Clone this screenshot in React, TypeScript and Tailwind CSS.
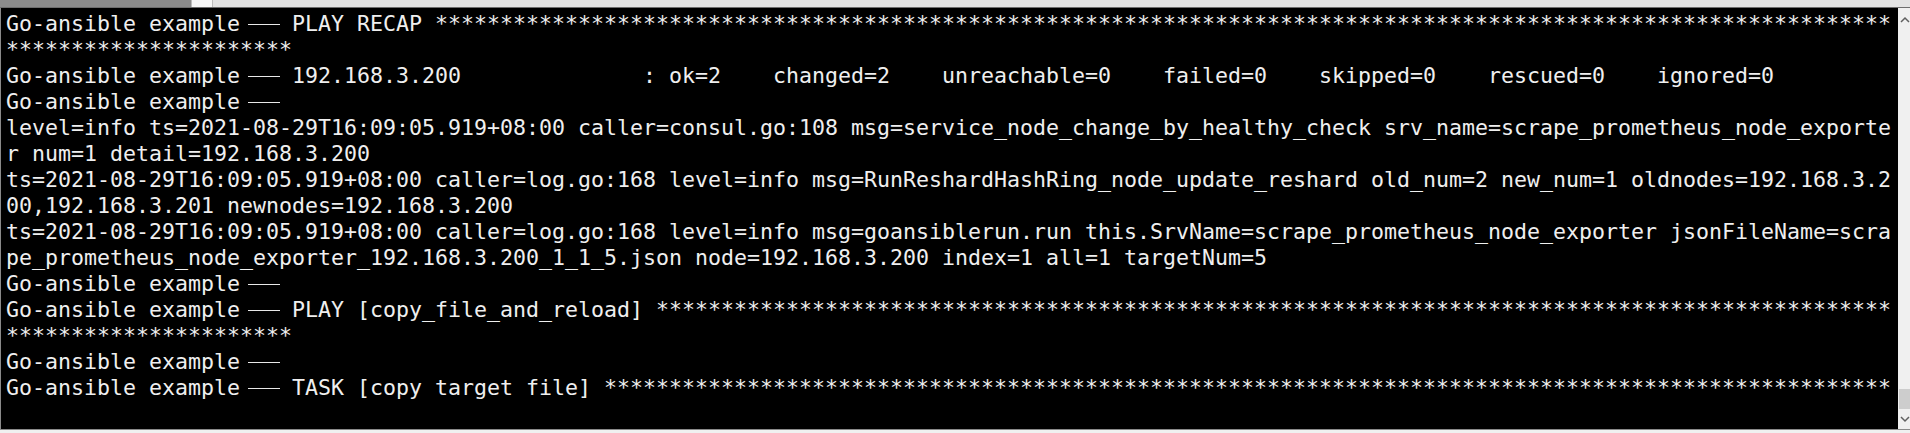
import React from "react";

const Dash = () => (
  <span className="inline-flex h-[26px] w-[52px] items-center align-top pl-[8px] pt-[1px]">
    <span className="block h-[1.5px] w-[32px] bg-[#e8e8e8]" />
  </span>
);

const Prefix = () => (
  <>
    Go-ansible example
    <Dash />
  </>
);

const stars = (n: number) => "*".repeat(n);

const Line = ({ children }: { children?: React.ReactNode }) => (
  <div className="h-[26px] leading-[26px] whitespace-pre">{children}</div>
);

export default function App() {
  return (
    <div className="w-[1910px] h-[433px] overflow-hidden bg-[#f0f0f0] flex flex-col">
      <div className="h-[7px] flex shrink-0">
        <div className="w-[191px] bg-[#8c8c8c]" />
        <div className="w-[22px] bg-[#f7f7f7] border-x border-[#bdbdbd]" />
        <div className="flex-1 bg-[#e3e3e3]" />
      </div>
      <div className="h-[1px] bg-[#6e6e6e] shrink-0" />
      <div className="flex-1 flex min-h-0">
        <div
          className="flex-1 bg-black border-l border-[#8a8a8a] pl-[5px] pt-[3px] text-[#efefef] text-[21.6px] overflow-hidden"
          style={{ fontFamily: '"DejaVu Sans Mono", monospace' }}
        >
          <Line>
            <Prefix />
            {"PLAY RECAP " + stars(112)}
          </Line>
          <Line>{stars(22)}</Line>
          <Line>
            <Prefix />
            {"192.168.3.200              : ok=2    changed=2    unreachable=0    failed=0    skipped=0    rescued=0    ignored=0"}
          </Line>
          <Line>
            <Prefix />
          </Line>
          <Line>
            {"level=info ts=2021-08-29T16:09:05.919+08:00 caller=consul.go:108 msg=service_node_change_by_healthy_check srv_name=scrape_prometheus_node_exporte"}
          </Line>
          <Line>{"r num=1 detail=192.168.3.200"}</Line>
          <Line>
            {"ts=2021-08-29T16:09:05.919+08:00 caller=log.go:168 level=info msg=RunReshardHashRing_node_update_reshard old_num=2 new_num=1 oldnodes=192.168.3.2"}
          </Line>
          <Line>{"00,192.168.3.201 newnodes=192.168.3.200"}</Line>
          <Line>
            {"ts=2021-08-29T16:09:05.919+08:00 caller=log.go:168 level=info msg=goansiblerun.run this.SrvName=scrape_prometheus_node_exporter jsonFileName=scra"}
          </Line>
          <Line>
            {"pe_prometheus_node_exporter_192.168.3.200_1_1_5.json node=192.168.3.200 index=1 all=1 targetNum=5"}
          </Line>
          <Line>
            <Prefix />
          </Line>
          <Line>
            <Prefix />
            {"PLAY [copy_file_and_reload] " + stars(95)}
          </Line>
          <Line>{stars(22)}</Line>
          <Line>
            <Prefix />
          </Line>
          <Line>
            <Prefix />
            {"TASK [copy target file] " + stars(99)}
          </Line>
        </div>
        <div className="w-[12px] bg-[#f0f0f0] flex flex-col items-center shrink-0">
          <svg width="12" height="20" viewBox="0 0 12 20" className="mt-[2px]">
            <path d="M3 12 L7 8 L11 12" fill="none" stroke="#606060" strokeWidth="1.5" />
          </svg>
          <div className="flex-1" />
          <div className="w-[11px] ml-[1px] h-[20px] bg-[#cdcdcd]" />
          <svg width="12" height="20" viewBox="0 0 12 20">
            <path d="M3 8 L7 12 L11 8" fill="none" stroke="#606060" strokeWidth="1.5" />
          </svg>
        </div>
      </div>
      <div className="h-[1px] bg-[#8a8a8a] shrink-0" />
      <div className="h-[3px] bg-[#f0f0f0] shrink-0" />
    </div>
  );
}
